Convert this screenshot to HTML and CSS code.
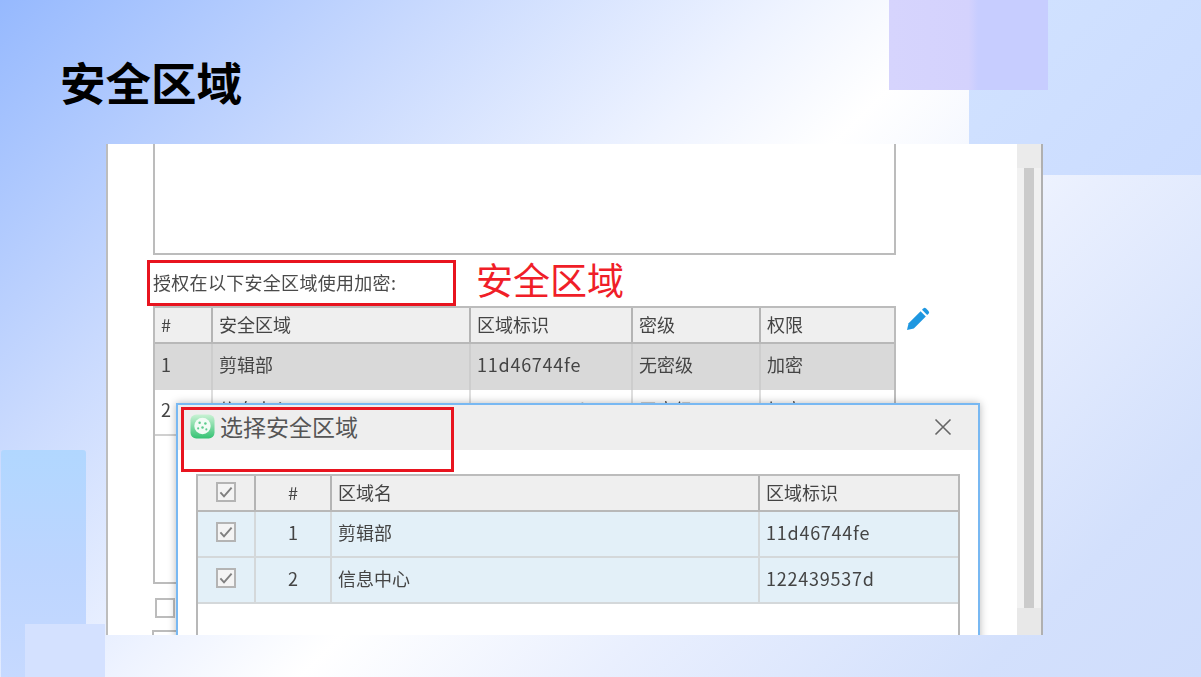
FILE: index.html
```html
<!DOCTYPE html>
<html lang="zh">
<head>
<meta charset="utf-8">
<title>安全区域</title>
<link rel="stylesheet" href="styles.css">
</head>
<body>
<div class="slide">
  <div class="deco deco-right"></div>
  <div class="deco deco-purple"></div>
  <div class="deco deco-left"></div>
  <div class="deco deco-corner"></div>

  <h1 class="title">安全区域</h1>

  <div class="window">
    <div class="main">
      <div class="textbox"></div>
      <div class="label-row">授权在以下安全区域使用加密:</div>
      <div class="bg-table">
        <div class="row bg-cols head"><span>#</span><span>安全区域</span><span>区域标识</span><span>密级</span><span>权限</span></div>
        <div class="row bg-cols selected"><span>1</span><span>剪辑部</span><span class="latin">11d46744fe</span><span>无密级</span><span>加密</span></div>
        <div class="row bg-cols plain"><span>2</span><span>信息中心</span><span class="latin">122439537d</span><span>无密级</span><span>加密</span></div>
      </div>
      <div class="check-empty"></div>
      <div class="field-stub"></div>
    </div>
    <div class="scrollbar"><div class="thumb"></div></div>

    <svg class="pencil" viewBox="0 0 24 24"><path d="M1 23l1.600-6.800L14.600 4.200l5.200 5.200L7.800 21.400z" fill="#1f97e0"/><path d="M16 2.800l1.300-1.300a2 2 0 0 1 2.800 0l2.400 2.400a2 2 0 0 1 0 2.800l-1.300 1.300z" fill="#1f97e0"/></svg>

    <div class="mark mark-label"></div>
    <div class="mark-text">安全区域</div>

    <div class="dialog">
      <div class="dialog-head">
        <svg class="app-icon" viewBox="0 0 26 26">
          <defs><linearGradient id="appg" x1="0" y1="0" x2="0" y2="1"><stop offset="0" stop-color="#c9f2d4"/><stop offset="1" stop-color="#35c273"/></linearGradient></defs>
          <rect x="0.500" y="0.500" width="25" height="25" rx="6" fill="url(#appg)"/>
          <circle cx="13" cy="12.500" r="8.500" fill="#f2fbf5"/>
          <circle cx="10" cy="9" r="1.300" fill="#5ccb8c"/><circle cx="16" cy="10" r="1.300" fill="#5ccb8c"/><circle cx="13" cy="14" r="1.300" fill="#5ccb8c"/><circle cx="8.500" cy="15" r="1.100" fill="#5ccb8c"/><circle cx="17" cy="16" r="1.100" fill="#5ccb8c"/>
        </svg>
        <span class="dialog-title">选择安全区域</span>
        <svg class="close" viewBox="0 0 18 18"><path d="M1.500 1.500l15 15M16.500 1.500l-15 15" stroke="#666" stroke-width="1.600" fill="none"/></svg>
      </div>
      <div class="dialog-body">
        <div class="dlg-table">
          <div class="row dlg-cols head">
            <span class="center"><i class="check"><svg viewBox="0 0 20 20"><path d="M3 10.500l4.500 5 9.500-11" stroke="#808080" stroke-width="2.400" fill="none"/></svg></i></span>
            <span class="center">#</span><span>区域名</span><span>区域标识</span>
          </div>
          <div class="row dlg-cols chosen">
            <span class="center"><i class="check"><svg viewBox="0 0 20 20"><path d="M3 10.500l4.500 5 9.500-11" stroke="#808080" stroke-width="2.400" fill="none"/></svg></i></span>
            <span class="center">1</span><span>剪辑部</span><span class="latin">11d46744fe</span>
          </div>
          <div class="row dlg-cols chosen">
            <span class="center"><i class="check"><svg viewBox="0 0 20 20"><path d="M3 10.500l4.500 5 9.500-11" stroke="#808080" stroke-width="2.400" fill="none"/></svg></i></span>
            <span class="center">2</span><span>信息中心</span><span class="latin">122439537d</span>
          </div>
        </div>
      </div>
      <div class="mark mark-title"></div>
    </div>
  </div>
</div>
</body>
</html>
```

FILE: styles.css
```css
* { box-sizing: border-box; }
html, body { margin: 0; padding: 0; }
body {
  width: 1201px;
  height: 677px;
  overflow: hidden;
  font-family: "Noto Sans CJK SC", "Noto Sans", sans-serif;
}
.slide {
  position: relative;
  width: 1201px;
  height: 677px;
  overflow: hidden;
  padding-top: 51px;
  background: linear-gradient(135deg, #96b9fe 0%, #c8d9fe 23%, #eef3ff 42%, #ffffff 52%, #e9effe 68%, #d3e0fc 88%, #cfddfc 100%);
}
.deco { position: absolute; }
.deco-right {
  left: 969px; top: 0; width: 232px; height: 175px;
  background: linear-gradient(135deg, #d1e2ff, #cbdcff);
}
.deco-purple {
  left: 889px; top: 0; width: 159px; height: 90px;
  background: linear-gradient(90deg, #d6d4fd 0%, #d4d2fd 50%, #c7cdff 56%, #c7cdff 100%);
}
.deco-left {
  left: 1px; top: 450px; width: 85px; height: 227px;
  border-radius: 3px 3px 0 0;
  background: linear-gradient(180deg, #b1d7ff 0%, #bcd5ff 50%, #c6d9ff 100%);
}
.deco-corner {
  left: 25px; top: 624px; width: 80px; height: 53px;
  background: #d4e1ff;
}
.title {
  position: relative;
  margin: 0 0 0 60px;
  height: 60px;
  font-size: 45.500px;
  line-height: 60px;
  font-weight: 700;
  color: #000;
}
.window {
  position: relative;
  display: flex;
  margin: 33px 0 0 106px;
  width: 937px;
  height: 491px;
  overflow: hidden;
  background: #fff;
  border-left: 2px solid #bdbdbd;
  border-right: 2px solid #b0b0b0;
  color: #444;
  font-size: 18px;
}
.main {
  flex: 1;
  padding-left: 45px;
  min-width: 0;
  filter: blur(0.4px);
}
.textbox {
  width: 743px;
  height: 111px;
  border: 2px solid #bcbcbc;
  border-top: 0;
}
.label-row {
  height: 51px;
  padding: 13px 0 0 0;
  font-size: 18px;
  letter-spacing: 0.300px;
  line-height: 28px;
  color: #4a4a4a;
  white-space: nowrap;
}
.bg-table {
  width: 743px;
  height: 278px;
  border: 2px solid #bcbcbc;
  border-top: 0;
}
.row { display: grid; }
.row > span {
  display: flex;
  align-items: center;
  padding-left: 6px;
  border-left: 2px solid #c4c4c4;
  white-space: nowrap;
}
.row > span:first-child { border-left: 0; }
.row > .latin { letter-spacing: 0.750px; }
.bg-cols { grid-template-columns: 56px 258px 162px 128px 135px; }
.head {
  background: #efefef;
  border-top: 2px solid #bcbcbc;
  border-bottom: 2px solid #b8b8b8;
  height: 38px;
}
.head > span { border-left-color: #b4b4b4; padding-bottom: 3px; }
.selected { background: #d9d9d9; height: 46px; }
.selected > span { border-left-color: #cdcdcd; padding-bottom: 7px; }
.plain { height: 46px; border-bottom: 2px solid #d0d0d0; }
.plain > span { border-left-color: #dedede; padding-bottom: 7px; }
.check-empty {
  width: 20px;
  height: 20px;
  margin: 14px 0 0 2px;
  border: 2px solid #bcbcbc;
}
.field-stub {
  width: 200px;
  height: 30px;
  margin: 12px 0 0 -1px;
  border: 2px solid #bcbcbc;
}
.scrollbar {
  width: 24px;
  flex: none;
  padding: 24px 7px 27px;
  background: linear-gradient(180deg, #ebebeb 0 24px, #f1f1f1 24px 464px, #e8e8e8 464px);
}
.thumb { width: 10px; height: 100%; background: #cbcbcb; }
.pencil {
  position: absolute;
  left: 798px; top: 163px;
  width: 24px; height: 24px;
}
.mark {
  position: absolute;
  border: 3px solid #e8141f;
}
.mark-label {
  left: 39px; top: 116px;
  width: 309px; height: 46px;
}
.mark-text {
  position: absolute;
  left: 368px; top: 108px;
  font-size: 37px;
  line-height: 54px;
  color: #f01e28;
  white-space: nowrap;
}
.dialog {
  position: absolute;
  left: 68px; top: 259px;
  width: 804px;
  height: 320px;
  background: #fff;
  border: 2px solid #78b8f2;
  border-bottom: 0;
  box-shadow: 0 0 8px rgba(0, 0, 0, 0.28);
}
.dialog-head {
  display: flex;
  align-items: center;
  height: 45px;
  padding: 0 26px 0 12px;
  background: #eeeeee;
}
.app-icon { width: 25px; height: 25px; flex: none; margin-top: -3px; }
.dialog-title {
  flex: 1;
  margin: -4px 0 0 5px;
  font-size: 23px;
  line-height: 30px;
  color: #555;
}
.close { width: 18px; height: 18px; margin-top: -2px; }
.dialog-body { padding: 24px 18px 0 18px; }
.dlg-table {
  height: 300px;
  border: 2px solid #b8b8b8;
  border-top: 0;
  border-bottom: 0;
  filter: blur(0.4px);
}
.dlg-cols { grid-template-columns: 56px 76px 428px 1fr; }
.chosen { background: #e3f0f8; height: 46px; border-bottom: 2px solid #d4d8da; }
.chosen > span { border-left-color: #d4d8da; padding-bottom: 5px; }
.row > .center { justify-content: center; padding-left: 0; padding-right: 0; }
.check {
  display: block;
  width: 20px; height: 20px;
  border: 2px solid #b4b4b4;
  background: #f4f4f4;
}
.check svg { display: block; width: 16px; height: 16px; }
.mark-title {
  left: 3px; top: 2px;
  width: 273px; height: 65px;
}
```
